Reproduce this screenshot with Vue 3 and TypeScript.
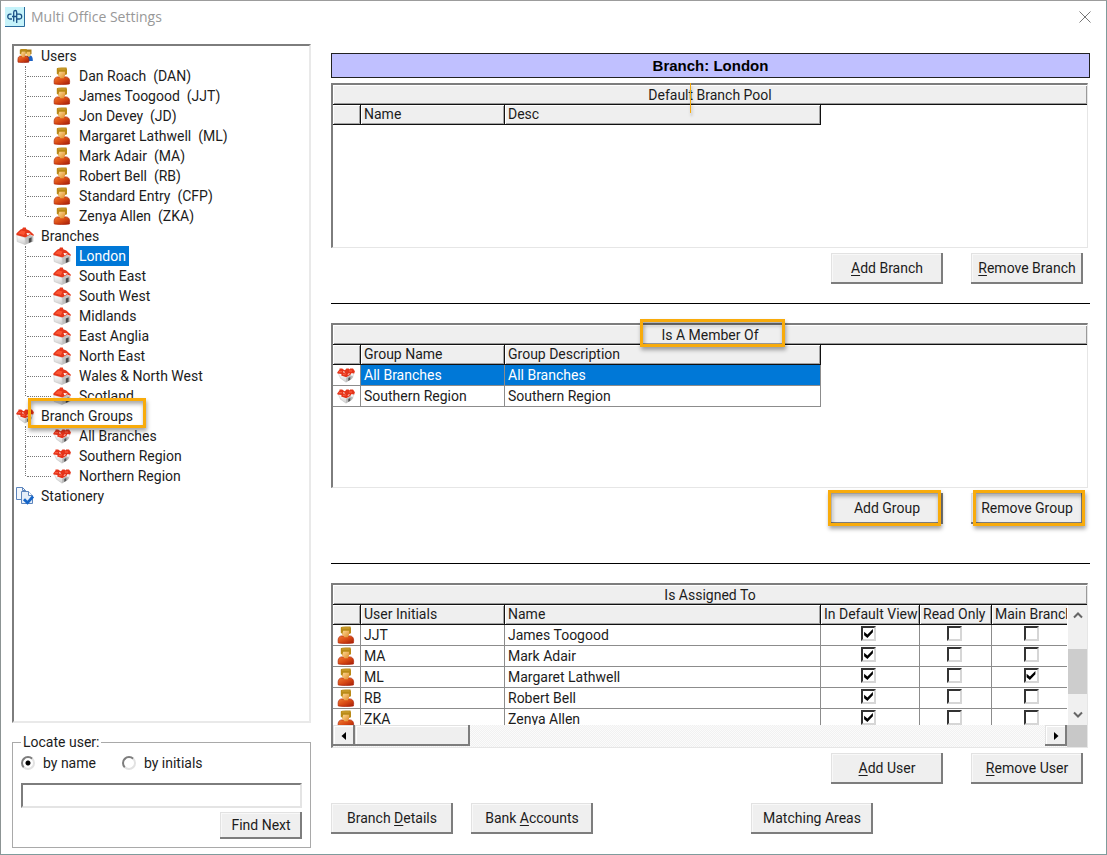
<script setup lang="ts">
import { ref } from 'vue'

interface TreeNode {
  label: string
  icon: string
  childIcon: string
  marked?: boolean
  children: string[]
}

interface AssignedUser {
  initials: string
  name: string
  inDefaultView: boolean
  readOnly: boolean
  mainBranch: boolean
}

const tree: TreeNode[] = [
  {
    label: 'Users',
    icon: 'users',
    childIcon: 'user',
    children: [
      'Dan Roach  (DAN)',
      'James Toogood  (JJT)',
      'Jon Devey  (JD)',
      'Margaret Lathwell  (ML)',
      'Mark Adair  (MA)',
      'Robert Bell  (RB)',
      'Standard Entry  (CFP)',
      'Zenya Allen  (ZKA)',
    ],
  },
  {
    label: 'Branches',
    icon: 'house',
    childIcon: 'house',
    children: [
      'London',
      'South East',
      'South West',
      'Midlands',
      'East Anglia',
      'North East',
      'Wales & North West',
      'Scotland',
    ],
  },
  {
    label: 'Branch Groups',
    icon: 'group',
    childIcon: 'group',
    marked: true,
    children: ['All Branches', 'Southern Region', 'Northern Region'],
  },
  { label: 'Stationery', icon: 'stationery', childIcon: '', children: [] },
]

const selectedNode = ref('London')
const selectedGroup = ref('All Branches')
const locateBy = ref('name')
const locateText = ref('')

const groups = [
  { name: 'All Branches', description: 'All Branches' },
  { name: 'Southern Region', description: 'Southern Region' },
]

const assigned = ref<AssignedUser[]>([
  { initials: 'JJT', name: 'James Toogood', inDefaultView: true, readOnly: false, mainBranch: false },
  { initials: 'MA', name: 'Mark Adair', inDefaultView: true, readOnly: false, mainBranch: false },
  { initials: 'ML', name: 'Margaret Lathwell', inDefaultView: true, readOnly: false, mainBranch: true },
  { initials: 'RB', name: 'Robert Bell', inDefaultView: true, readOnly: false, mainBranch: false },
  { initials: 'ZKA', name: 'Zenya Allen', inDefaultView: true, readOnly: false, mainBranch: false },
])
</script>

<template>
  <div class="window">
    <svg class="sprite" aria-hidden="true">
      <defs>
        <linearGradient id="g-body" x1="0" y1="0" x2="1" y2="1">
          <stop offset="0" stop-color="#f07a30" />
          <stop offset="0.5" stop-color="#d84a14" />
          <stop offset="1" stop-color="#a01a08" />
        </linearGradient>
        <linearGradient id="g-face" x1="0" y1="0" x2="1" y2="1">
          <stop offset="0" stop-color="#ffe09a" />
          <stop offset="1" stop-color="#e08a2c" />
        </linearGradient>
        <linearGradient id="g-wall" x1="0" y1="0" x2="0" y2="1">
          <stop offset="0" stop-color="#ffffff" />
          <stop offset="1" stop-color="#cfcfcf" />
        </linearGradient>
      </defs>
      <symbol id="user" viewBox="0 0 18 18">
        <path d="M1.300 17C.7 12.500 1.600 10.400 4.500 9.900H13C16 10.200 17.200 12.500 16.400 17Q9 18.200 1.300 17Z" fill="url(#g-body)" stroke="#b02408" stroke-width=".7" />
        <path d="M5 4H12V8.500L11 11.200H7.600L5 8.500Z" fill="url(#g-face)" />
        <path d="M3.800 6.800V1.600Q4.500.6 8.600.6H13.500L14 2.500V7.200L12 8V4.800H6.200L5.400 8Z" fill="#b98a18" />
        <path d="M5 2H12.500" stroke="#d0a436" />
      </symbol>
      <symbol id="users" viewBox="0 0 18 18">
        <path d="M11 8.500H14.500Q17 9 16.800 14H10.500Z" fill="#1d62c4" />
        <path d="M10.500 4H14.500V8.500L13 10L10.500 8.500Z" fill="#f5c260" />
        <path d="M9.500 6V2.500H15.500V7L14.200 7.500V4.800H11Z" fill="#a87a16" />
        <path d="M2 15.200C1.600 11 2.300 9.300 4.500 9H10C12.300 9.300 13.300 11 12.800 15.200Q7.500 16 2 15.200Z" fill="url(#g-body)" stroke="#9c1a0a" stroke-width=".6" />
        <path d="M5 4.500H9.500V8L8.500 10.300H6.500L5 8.200Z" fill="url(#g-face)" />
        <path d="M3.800 7V2.800L5 2H10.800V6.500L9.500 7.200V4.800H5.800L5 7.500Z" fill="#b98a18" />
      </symbol>
      <symbol id="house" viewBox="0 0 18 18">
        <path d="M.8 8L9.200 10.800V17.700L1.200 14.600Z" fill="url(#g-wall)" stroke="#b8b8b8" stroke-width=".4" />
        <path d="M9.200 10.800L13.500 7.400L17.300 9.200V14.400L9.200 17.700Z" fill="#c0c0c0" />
        <path d="M12.800 11.500L15.600 10.300V14.800L12.800 16Z" fill="#4a4a4a" />
        <path d="M.4 6.600L4.500 2.600Q5.500 1.800 6.200 2L7 .6H9.800L10.300 2.200L13.300 3.600L17.700 7.600V9L14.200 7.600L9.500 10.400L.4 8Z" fill="#e5371a" />
        <path d="M2 6.600L5.500 3.500L9.500 4.500L8 8Z" fill="#fb5533" />
        <path d="M10.500 6L14.500 6.500L11.500 8.500Z" fill="#fff" />
      </symbol>
      <symbol id="group" viewBox="0 0 18 18">
        <path d="M1.200 7H16.800L15.500 12L9 16.200L3.500 12.300Z" fill="url(#g-wall)" stroke="#b0b0b0" stroke-width=".4" />
        <path d="M9.200 12L13 9L16 10.500L14.500 13L9.200 16Z" fill="#b8b8b8" />
        <path d="M11.300 12L13.300 11V13.800L11.300 14.900Z" fill="#505050" />
        <path d="M.2 6.500L2.500 3.600V2.500H5.200L7.500 4.200L9 3.300L9.300 2.400H11.500L13 3.500V2.400H16L17.900 5.200L17.200 7.500L14.500 6.900L13.500 8.700L9.300 11.300L4.200 9.600L4.500 7.900L.6 7.500Z" fill="#e5341a" />
        <path d="M1.800 5.700H5M6 8.500L9 7.800M12 5H15" fill="none" stroke="#ff6545" stroke-width="1" />
        <path d="M6 5.800L7.800 6.200M10.800 8.400L12.500 7.700" stroke="#fff" stroke-width=".9" />
      </symbol>
      <symbol id="stationery" viewBox="0 0 18 18">
        <path d="M.5.5H6.500L9.500 3.500V12.500H.5Z" fill="#f3f7fc" stroke="#5d85bd" />
        <path d="M6.500.5V3.500H9.500" fill="none" stroke="#5d85bd" />
        <path d="M5.500 4.500H12.500L16.500 8.500V16.500H5.500Z" fill="#e4edf8" stroke="#5d85bd" />
        <path d="M12.500 4.500V8.500H16.500" fill="#fff" stroke="#5d85bd" />
        <path d="M8 12.200L11.500 15.800L17 9.500" fill="none" stroke="#1565c8" stroke-width="2.800" />
      </symbol>
    </svg>

    <header class="titlebar">
      <svg class="logo" viewBox="0 0 20 20" aria-hidden="true">
        <rect width="20" height="20" fill="#c6f3fa" />
        <path d="M0 19.500H19.500V0" fill="none" stroke="#2a6a9c" />
        <path d="M6.500 7.200H5Q2.800 7.200 2.800 9.600T5 12H7M7 9.500H12M8.700 14.500V5.500Q8.700 3.500 10.200 3.500T11.700 5.200V16M11.700 7.200H14.500Q16.700 7.200 16.700 9.600T14.500 12H11.700" fill="none" stroke="#1c5286" stroke-width="1.300" />
      </svg>
      <h1 class="title">Multi Office Settings</h1>
      <button class="close" type="button" aria-label="Close">
        <svg viewBox="0 0 12 12" aria-hidden="true"><path d="M.5.5L11.500 11.500M11.500.5L.5 11.500" stroke="#777" fill="none" /></svg>
      </button>
    </header>

    <main class="content">
      <div class="side">
        <ul class="tree" role="tree">
          <li v-for="node in tree" :key="node.label" role="treeitem">
            <div class="root">
              <svg class="icon" aria-hidden="true"><use :href="'#' + node.icon" /></svg>
              <span class="root-label">{{ node.label }}</span>
              <i v-if="node.marked" class="mark mark-tree"></i>
            </div>
            <ul v-if="node.children.length" class="branch" role="group">
              <li
                v-for="child in node.children"
                :key="child"
                class="leaf"
                role="treeitem"
                @click="selectedNode = child"
              >
                <svg class="icon" aria-hidden="true"><use :href="'#' + node.childIcon" /></svg>
                <span class="leaf-label" :class="{ selected: selectedNode === child }">{{ child }}</span>
              </li>
            </ul>
          </li>
        </ul>

        <fieldset class="locate">
          <legend>Locate user:</legend>
          <div class="radios">
            <label><input v-model="locateBy" type="radio" name="locate" value="name" />by name</label>
            <label><input v-model="locateBy" type="radio" name="locate" value="initials" />by initials</label>
          </div>
          <input v-model="locateText" class="search" type="text" aria-label="Locate user" />
          <button class="btn find" type="button">Find Next</button>
        </fieldset>
      </div>

      <div class="detail">
        <h2 class="banner">Branch: London</h2>

        <section class="section">
          <div class="grid">
            <div id="pool-title" class="grid-title">Default Branch Pool<i class="caret"></i></div>
            <div class="grid-body">
              <table aria-labelledby="pool-title">
                <colgroup><col class="c-icon" /><col class="c-key" /><col class="c-text" /></colgroup>
                <thead>
                  <tr><th></th><th>Name</th><th>Desc</th></tr>
                </thead>
              </table>
            </div>
          </div>
          <div class="actions">
            <button class="btn" type="button"><span><u>A</u>dd Branch</span></button>
            <button class="btn" type="button"><span><u>R</u>emove Branch</span></button>
          </div>
        </section>

        <section class="section ruled tall">
          <div class="grid">
            <div id="member-title" class="grid-title">
              <span class="marked-title">Is A Member Of<i class="mark mark-title"></i></span>
            </div>
            <div class="grid-body">
              <table aria-labelledby="member-title">
                <colgroup><col class="c-icon" /><col class="c-key" /><col class="c-text" /></colgroup>
                <thead>
                  <tr><th></th><th>Group Name</th><th>Group Description</th></tr>
                </thead>
                <tbody>
                  <tr
                    v-for="group in groups"
                    :key="group.name"
                    :class="{ active: selectedGroup === group.name }"
                    @click="selectedGroup = group.name"
                  >
                    <td class="cell-icon"><svg class="icon" aria-hidden="true"><use href="#group" /></svg></td>
                    <td>{{ group.name }}</td>
                    <td>{{ group.description }}</td>
                  </tr>
                </tbody>
              </table>
            </div>
          </div>
          <div class="actions">
            <button class="btn" type="button">Add Group<i class="mark mark-add"></i></button>
            <button class="btn" type="button">Remove Group<i class="mark mark-remove"></i></button>
          </div>
        </section>

        <section class="section ruled">
          <div class="grid">
            <div id="assigned-title" class="grid-title">Is Assigned To</div>
            <div class="scroller">
              <div class="viewport">
                <table aria-labelledby="assigned-title">
                  <colgroup>
                    <col class="c-icon" /><col class="c-key" /><col class="c-text" />
                    <col class="c-view" /><col class="c-read" /><col class="c-main" />
                  </colgroup>
                  <thead>
                    <tr>
                      <th></th><th>User Initials</th><th>Name</th>
                      <th>In Default View</th><th>Read Only</th><th>Main Branch</th>
                    </tr>
                  </thead>
                  <tbody>
                    <tr v-for="user in assigned" :key="user.initials">
                      <td class="cell-icon"><svg class="icon" aria-hidden="true"><use href="#user" /></svg></td>
                      <td>{{ user.initials }}</td>
                      <td>{{ user.name }}</td>
                      <td class="cell-check"><input v-model="user.inDefaultView" type="checkbox" :aria-label="user.name + ' in default view'" /></td>
                      <td class="cell-check"><input v-model="user.readOnly" type="checkbox" :aria-label="user.name + ' read only'" /></td>
                      <td class="cell-check"><input v-model="user.mainBranch" type="checkbox" :aria-label="user.name + ' main branch'" /></td>
                    </tr>
                  </tbody>
                </table>
              </div>
              <div class="vbar">
                <button type="button" aria-label="Scroll up">
                  <svg viewBox="0 0 10 8" aria-hidden="true"><path d="M1 6.500L5 2.500L9 6.500" fill="none" stroke="#666" stroke-width="2" /></svg>
                </button>
                <div class="vthumb"></div>
                <button type="button" aria-label="Scroll down">
                  <svg viewBox="0 0 10 8" aria-hidden="true"><path d="M1 1.500L5 5.500L9 1.500" fill="none" stroke="#666" stroke-width="2" /></svg>
                </button>
              </div>
              <div class="hbar">
                <button class="raised" type="button" aria-label="Scroll left">
                  <svg viewBox="0 0 10 8" aria-hidden="true"><path d="M7 0V8L2.500 4Z" /></svg>
                </button>
                <div class="raised hthumb"></div>
                <button class="raised" type="button" aria-label="Scroll right">
                  <svg viewBox="0 0 10 8" aria-hidden="true"><path d="M3 0V8L7.500 4Z" /></svg>
                </button>
              </div>
              <div class="corner"></div>
            </div>
          </div>
          <div class="actions">
            <button class="btn" type="button"><span><u>A</u>dd User</span></button>
            <button class="btn" type="button"><span><u>R</u>emove User</span></button>
          </div>
        </section>

        <div class="footer">
          <button class="btn" type="button"><span>Branch <u>D</u>etails</span></button>
          <button class="btn" type="button"><span>Bank <u>A</u>ccounts</span></button>
          <button class="btn matching" type="button">Matching Areas</button>
        </div>
      </div>
    </main>
  </div>
</template>

<style>
body {
  margin: 0;
  background: #fff;
}
</style>

<style scoped>
.window {
  box-sizing: border-box;
  min-height: 100vh;
  display: flex;
  flex-direction: column;
  border: 1px solid #7f9c9c;
  border-top-color: #9c9c9c;
  border-left-color: #8c9494;
  background: #fff;
  color: #1c1c1c;
  font: 14px/20px Roboto, "Liberation Sans", sans-serif;
}
.sprite {
  position: absolute;
  width: 0;
  height: 0;
}
button,
input {
  font: inherit;
  color: inherit;
  margin: 0;
  padding: 0;
  border: 0;
  border-radius: 0;
  box-sizing: border-box;
}
ul {
  list-style: none;
  margin: 0;
  padding: 0;
}
u {
  text-underline-offset: 2px;
}

.titlebar {
  display: flex;
  align-items: center;
  height: 31px;
  padding: 0 15px 0 4px;
}
.logo {
  width: 20px;
  height: 20px;
}
.title {
  flex: 1;
  margin: 0 0 0 6px;
  color: #989898;
  font: 14px/20px "Open Sans", "Noto Sans", sans-serif;
}
.close {
  display: flex;
  background: none;
}
.close svg {
  width: 12px;
  height: 12px;
}

.content {
  flex: 1;
  display: grid;
  grid-template-columns: 299px minmax(0, 1fr);
  gap: 20px;
  padding: 12px 16px 6px 11px;
}
.side {
  display: flex;
  flex-direction: column;
  gap: 11px;
}

.tree {
  flex: 1;
  box-sizing: border-box;
  border: 2px solid #e9e9e9;
  border-top-color: #7d7d7d;
  border-left-color: #7d7d7d;
}
.icon {
  flex: none;
  display: block;
  width: 18px;
  height: 18px;
}
.root {
  position: relative;
  display: flex;
  align-items: center;
  height: 20px;
  padding-left: 2px;
}
.root-label {
  padding-left: 7px;
}
.leaf {
  position: relative;
  display: flex;
  align-items: center;
  height: 20px;
  padding-left: 39px;
}
.leaf::before {
  content: "";
  position: absolute;
  left: 11px;
  top: 0;
  height: 20px;
  border-left: 1px dotted #777;
}
.leaf:last-child::before {
  height: 10px;
}
.leaf::after {
  content: "";
  position: absolute;
  left: 13px;
  top: 10px;
  width: 24px;
  border-top: 1px dotted #777;
}
.leaf-label {
  margin-left: 5px;
  padding: 0 3px;
  white-space: pre;
}
.selected {
  background: #0078d7;
  color: #fff;
}

.mark {
  position: absolute;
  z-index: 1;
  box-sizing: border-box;
  border: 3px solid #f8ab0b;
  box-shadow: 1px 3px 4px rgba(0, 0, 0, 0.35), inset 1px 3px 4px rgba(0, 0, 0, 0.35);
  pointer-events: none;
}
.mark-tree {
  left: 14px;
  top: -8px;
  width: 118px;
  height: 30px;
}
.marked-title {
  position: relative;
}
.mark-title {
  inset: -8px -26px -4px -21px;
}
.mark-add {
  inset: -3px 2px -2px -3px;
}
.mark-remove {
  inset: -3px -2px -2px 2px;
}

.locate {
  min-width: 0;
  margin: 0;
  padding: 3px 8px 8px;
  display: flex;
  flex-direction: column;
  border: 1px solid #a9a9a9;
}
.locate legend {
  padding: 0 2px;
  line-height: 16px;
}
.radios {
  display: flex;
  gap: 26px;
  margin-bottom: 10px;
}
.radios label {
  display: flex;
  align-items: center;
  gap: 8px;
}
.radios input {
  appearance: none;
  width: 14px;
  height: 14px;
  border: 2px solid #e2e2e2;
  border-top-color: #7d7d7d;
  border-left-color: #7d7d7d;
  border-radius: 50%;
}
.radios input:checked {
  background: radial-gradient(circle, #000 0 2px, transparent 3px);
}
.search {
  height: 25px;
  padding: 0 4px;
  border: 2px solid #e4e4e4;
  border-top-color: #7d7d7d;
  border-left-color: #7d7d7d;
  background: #fff;
}

.btn {
  position: relative;
  width: 112px;
  height: 31px;
  padding-bottom: 2px;
  background: #efefef;
  box-shadow: inset -2px -2px 0 #7d7d7d, inset 1px 1px 0 #e2e2e2, inset 2px 2px 0 #f8f8f8;
  white-space: nowrap;
}
.find {
  width: 82px;
  height: 27px;
  margin-top: 4px;
  align-self: flex-end;
}

.detail {
  min-width: 0;
  padding-top: 9px;
}
.banner {
  box-sizing: border-box;
  height: 25px;
  margin: 0 0 5px;
  border: 1px solid #222;
  background: #c0c0ff;
  color: #000;
  text-align: center;
  font: bold 15px/23px "Liberation Sans", Arial, sans-serif;
}
.section {
  padding-bottom: 19px;
}
.tall {
  padding-bottom: 39px;
}
.ruled {
  border-top: 1px solid #000;
  padding-top: 19px;
}
.grid {
  margin-right: 2px;
  border: 1px solid #e6e6e6;
  border-top: 2px solid #7d7d7d;
  border-left: 2px solid #7d7d7d;
}
.grid-title {
  position: relative;
  height: 19px;
  border-bottom: 1px solid #111;
  background: #efefef;
  box-shadow: inset 1px 1px 0 #fff, inset -1px -1px 0 #9a9a9a;
  text-align: center;
}
.caret {
  position: absolute;
  z-index: 1;
  left: calc(50% - 20px);
  top: -2px;
  height: 30px;
  border-left: 1px solid #f8ab0b;
  box-shadow: 1px 3px 3px rgba(0, 0, 0, 0.3);
}
.grid-body {
  min-height: 142px;
}
table {
  table-layout: fixed;
  width: 488px;
  border-collapse: separate;
  border-spacing: 0;
}
.c-icon { width: 28px; }
.c-key { width: 144px; }
.c-text { width: 316px; }
.c-view { width: 99px; }
.c-read { width: 72px; }
.c-main { width: 82px; }
th,
td {
  box-sizing: border-box;
  padding: 0 3px;
  overflow: hidden;
  text-align: left;
  font-weight: normal;
  white-space: nowrap;
}
th {
  height: 20px;
  border-right: 1px solid #111;
  border-bottom: 1px solid #111;
  background: #efefef;
  box-shadow: inset 1px 1px 0 #fff, inset -1px -1px 0 #a4a4a4;
  line-height: 19px;
}
td {
  height: 21px;
  border-right: 1px solid #8c8c8c;
  border-bottom: 1px solid #8c8c8c;
  line-height: 20px;
}
.active td {
  background: #0078d7;
  color: #fff;
}
.active .cell-icon,
.cell-icon {
  padding: 0 4px;
  background: #fff;
}
.cell-check {
  padding: 0 3px 0 0;
}
.cell-check input {
  appearance: none;
  display: block;
  width: 15px;
  height: 15px;
  margin: 0 auto 3px;
  border: 2px solid #d6d6d6;
  border-top-color: #333;
  border-left-color: #333;
}
.cell-check input:checked::before {
  content: "";
  display: block;
  width: 11px;
  height: 11px;
  background: #000;
  clip-path: polygon(10% 35%, 40% 60%, 90% 8%, 90% 38%, 40% 92%, 10% 65%);
}

.scroller {
  display: grid;
  grid-template: 120px 22px / minmax(0, 1fr) 20px;
}
.viewport {
  overflow: hidden;
}
.viewport table {
  width: 741px;
}
.vbar {
  display: flex;
  flex-direction: column;
  margin-left: 1px;
  background: #f0f0f0;
}
.vbar button {
  display: grid;
  place-items: center;
  height: 20px;
  background: none;
}
.vbar svg,
.hbar svg {
  width: 10px;
  height: 8px;
}
.vthumb {
  height: 45px;
  margin: 24px 0 auto;
  background: #cdcdcd;
}
.hbar {
  display: flex;
  background: repeating-conic-gradient(#f1f1f1 0 25%, #fbfbfb 0 50%) 0 0 / 2px 2px;
}
.raised {
  display: grid;
  place-items: center;
  width: 22px;
  height: 21px;
  background: #efefef;
  box-shadow: inset -2px -2px 0 #7d7d7d, inset 1px 1px 0 #e2e2e2, inset 2px 2px 0 #fff;
}
.hthumb {
  width: 115px;
  margin-right: auto;
}
.corner {
  background: #c8c8c8;
}

.actions {
  display: flex;
  justify-content: flex-end;
  gap: 28px;
  padding: 5px 7px 0 0;
}
.footer {
  display: flex;
  gap: 18px;
}
.footer .btn {
  width: 122px;
}
.footer .matching {
  margin-left: 140px;
}
</style>
